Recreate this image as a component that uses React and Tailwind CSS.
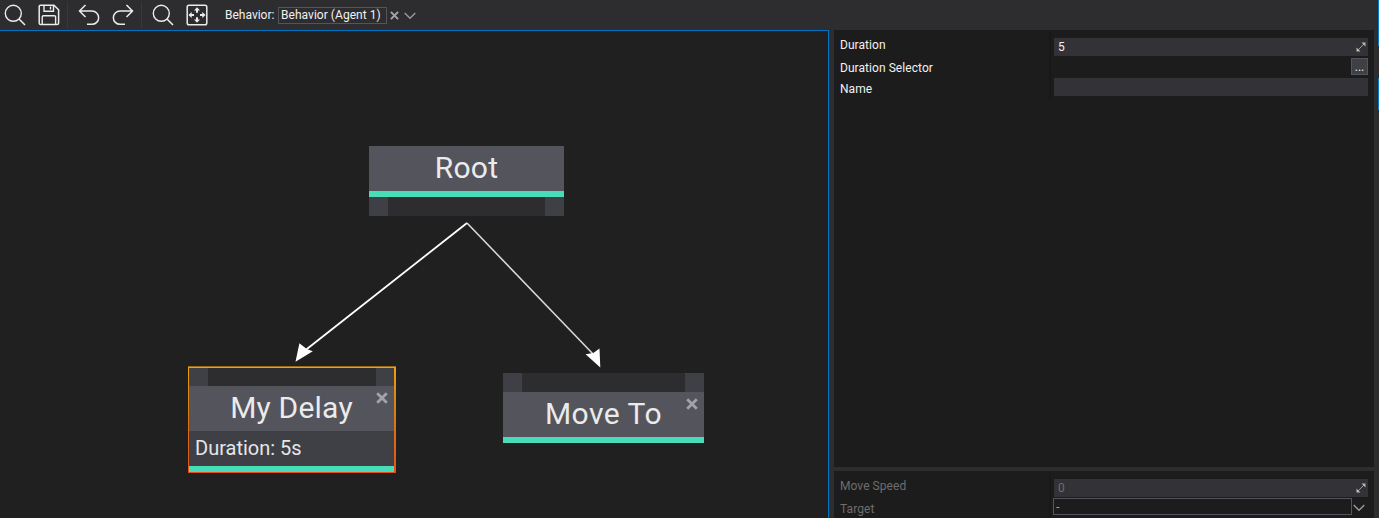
const Svg = ({ w, h, children, className = "" }) => (
  <svg width={w} height={h} viewBox={`0 0 ${w} ${h}`} fill="none" className={`block shrink-0 ${className}`}>{children}</svg>
);

const Search = () => (
  <Svg w={22} h={22}>
    <circle cx="9.3" cy="9.3" r="8" stroke="#ececec" strokeWidth="1.4" />
    <path d="M15 15L21 21" stroke="#ececec" strokeWidth="1.6" />
  </Svg>
);

const Save = () => (
  <Svg w={22} h={22}>
    <path d="M2.5 1.2H16L20.6 5.8V19a1.6 1.6 0 0 1-1.6 1.6H2.8A1.6 1.6 0 0 1 1.2 19V2.5A1.3 1.3 0 0 1 2.5 1.2Z" stroke="#ececec" strokeWidth="1.5" />
    <path d="M6 1.5V7.3H15.5V1.5M12.5 2.5V5.5M4.2 20.5V13A1.3 1.3 0 0 1 5.5 11.7H16.3A1.3 1.3 0 0 1 17.6 13V20.5" stroke="#ececec" strokeWidth="1.4" />
  </Svg>
);

const Undo = ({ flip }) => (
  <Svg w={22} h={22} className={flip ? "-scale-x-100" : ""}>
    <path d="M7.5 1L1.5 7L7.5 13M1.5 7H14A6.6 6.6 0 0 1 14 20.3H9" stroke="#ececec" strokeWidth="1.5" />
  </Svg>
);

const Fit = () => (
  <Svg w={22} h={22}>
    <rect x="1.2" y="1.2" width="19.6" height="19.6" rx="1.8" stroke="#ececec" strokeWidth="1.5" />
    <path d="M11 3.2L14 6.5H12V8.8H10V6.5H8ZM11 18.8L14 15.5H12V13.2H10V15.5H8ZM2.4 11L5.7 8V10H8V12H5.7V14ZM19.6 11L16.3 8V10H14V12H16.3V14Z" fill="#ececec" />
  </Svg>
);

const Cross = ({ s, className = "" }) => (
  <svg width={s} height={s} viewBox="0 0 12 12" className={`block shrink-0 ${className}`}>
    <path d="M1.2 1.2L10.8 10.8M10.8 1.2L1.2 10.8" stroke="#a3a3a8" strokeWidth="2.7" />
  </svg>
);

const Chevron = () => (
  <Svg w={12} h={8}><path d="M.7 1L6 6.3L11.3 1" stroke="#96969a" strokeWidth="1.5" /></Svg>
);

const Expand = () => (
  <Svg w={10} h={10}>
    <path d="M1.5 8.5L8.5 1.5" stroke="#999" />
    <path d="M5.5 .5H9.5V4.5ZM.5 5.5V9.5H4.5Z" fill="#b8b8b8" />
  </Svg>
);

const Pins = ({ selected }) => (
  <div className={`flex shrink-0 justify-between bg-[#2d2d2f] ${selected ? "h-[18px]" : "h-[19px]"}`}>
    <div className="w-[19px] bg-[#3f3f46]" />
    <div className={`bg-[#3f3f46] ${selected ? "w-[18px]" : "w-[19px]"}`} />
  </div>
);

const Title = ({ children, closable, className = "" }) => (
  <div className="relative flex h-[45px] shrink-0 items-center justify-center bg-[#54545c] pb-[2px]">
    <span className={`whitespace-nowrap text-[30px] leading-[36px] text-[#ebebeb] ${className}`}>{children}</span>
    {closable && <Cross s={12} className="absolute right-[6px] top-[6px]" />}
  </div>
);

const Accent = () => <div className="h-[6px] shrink-0 bg-[#48ddb8]" />;
const Label = ({ children, className = "" }) => <div className={`pl-[6px] text-[12px] leading-[16px] tracking-[0.06px] ${className}`}>{children}</div>;

export default function App() {
  return (
    <div className="flex h-[518px] w-[1379px] flex-col overflow-hidden bg-[#2d2d30] font-['Roboto',sans-serif] text-[12px] text-[#f1f1f1]">
      <header className="flex h-[30px] shrink-0 items-center pl-[4px]">
        <Search />
        <div className="ml-[12px]"><Save /></div>
        <div className="ml-[7px] h-[26px] w-px bg-[#38383b]" />
        <div className="ml-[10px]"><Undo /></div>
        <div className="ml-[12px]"><Undo flip /></div>
        <div className="ml-[7px] h-[26px] w-px bg-[#38383b]" />
        <div className="ml-[10px]"><Search /></div>
        <div className="ml-[12px]"><Fit /></div>
        <span className="ml-[17px] w-[53px] whitespace-nowrap">Behavior:</span>
        <div className="flex h-[17px] w-[109px] items-center whitespace-nowrap border border-[#54545c] pl-[2px] tracking-[0.04px]">Behavior (Agent 1)</div>
        <Cross s={9} className="ml-[3px]" />
        <div className="ml-[5px] mt-[2px]"><Chevron /></div>
      </header>

      <main className="flex min-h-0 flex-1">
        <section className="relative w-[829px] shrink-0 overflow-hidden border-r border-t border-[#0074c4] bg-[#202020]">
          <svg className="absolute left-0 top-[-1px]" width="828" height="488" viewBox="0 30 828 488" fill="none">
            <path d="M305 350.5L467 223" stroke="#fff" strokeWidth="1.8" />
            <path d="M467 223L594 355" stroke="#ddd" strokeWidth="1.5" />
            <path d="M295.5 361.7L299.4 343.2L306.7 349L312.8 351.2Z" fill="#fff" />
            <path d="M600.3 367.5L585.6 354.3L593.3 353L599.5 348.5Z" fill="#fff" />
          </svg>

          <div className="absolute left-[369px] top-[115px] flex w-[195px] flex-col">
            <Title className="tracking-[0.3px]">Root</Title><Accent /><Pins />
          </div>

          <div className="absolute left-[188px] top-[335px] w-[208px] bg-[linear-gradient(180deg,#a06a10_0px,#a06a10_1px,#f0a010_1px,#dc8610_30%,#e4501c_100%)] pb-[1px] pl-[1px] pr-[2px] pt-[2px]">
            <div className="flex flex-col">
              <Pins selected /><Title closable className="tracking-[0.2px]">My Delay</Title>
              <div className="flex h-[35px] items-center bg-[#3f3f46] pb-[2px] pl-[6px] text-[20px] text-[#e6e6e6]">Duration: 5s</div>
              <Accent />
            </div>
          </div>

          <div className="absolute left-[503px] top-[342px] flex w-[201px] flex-col">
            <Pins /><Title closable className="tracking-[0.5px]">Move To</Title><Accent />
          </div>
        </section>

        <aside className="ml-[5px] flex w-[540px] shrink-0 flex-col gap-[4px]">
          <div className="flex h-[437px] shrink-0 bg-[#1c1c1c]">
            <div className="w-[215px] pt-[7px]">
              <Label>Duration</Label>
              <Label className="mt-[7px]">Duration Selector</Label>
              <Label className="mt-[5px]">Name</Label>
            </div>
            <div className="mr-[3px] mt-[2px] h-[68px] w-[2px] bg-[#181818]" />
            <div className="flex w-[314px] flex-col items-end pt-[8px]">
              <div className="flex h-[18px] w-full items-center justify-between bg-[#333337] pl-[4px] pr-[2px]"><span>5</span><Expand /></div>
              <button className="mt-[2px] flex h-[17px] w-[17px] items-center justify-center border border-[#54545c] bg-[#3f3f46]">...</button>
              <div className="mt-[3px] h-[18px] w-full bg-[#333337]" />
            </div>
          </div>
          <div className="flex h-[47px] shrink-0 overflow-hidden bg-[#1c1c1c] text-[#6d6d6d]">
            <div className="w-[215px] pt-[7px]"><Label>Move Speed</Label><Label className="mt-[7px]">Target</Label></div>
            <div className="mr-[3px] mt-[2px] w-[2px] bg-[#181818]" />
            <div className="w-[314px] pt-[8px]">
              <div className="flex h-[18px] items-center justify-between bg-[#333337] pl-[4px] pr-[2px]"><span>0</span><Expand /></div>
              <div className="mt-px flex items-center">
                <div className="ml-[-1px] flex h-[17px] w-[299px] items-center border border-[#54545c] pl-[2px] text-[#ff8c00]">-</div>
                <div className="ml-[1px] mt-[3px]"><Chevron /></div>
              </div>
            </div>
          </div>
        </aside>
        <div className="ml-auto flex w-px flex-col">
          <div className="mt-[-30px] h-[46px] bg-[#0079cc]" />
          <div className="mt-[32px] h-[32px] bg-[#0079cc]" />
        </div>
      </main>
    </div>
  );
}
